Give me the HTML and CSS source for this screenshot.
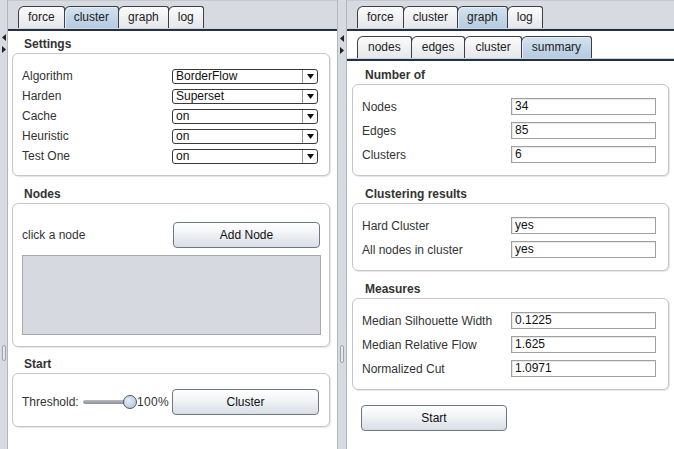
FILE: index.html
```html
<!DOCTYPE html>
<html lang="en">
<head>
    <meta charset="UTF-8">
    <title>BorderFlow Clustering</title>
    <link rel="stylesheet" href="styles.css">
</head>
<body>
<div class="window">

    <div class="strip">
        <svg class="arrow" width="4" height="7" viewBox="0 0 4 7"><path d="M4 0V7L0 3.5Z"/></svg>
        <svg class="arrow" width="4" height="7" viewBox="0 0 4 7"><path d="M0 0V7L4 3.5Z"/></svg>
        <div class="grip"></div>
    </div>

    <div class="pane pane-left">
        <div class="tabbar">
            <span class="tab">force</span>
            <span class="tab selected">cluster</span>
            <span class="tab">graph</span>
            <span class="tab">log</span>
        </div>
        <div class="tabline"></div>

        <div class="pane-body">
            <div class="section-title">Settings</div>
            <div class="group settings">
                <span class="label">Algorithm</span>
                <div class="combo"><span class="combo-value">BorderFlow</span><span class="combo-arrow"><svg width="7" height="5" viewBox="0 0 7 5"><path d="M0 0H7L3.5 5Z"/></svg></span></div>
                <span class="label">Harden</span>
                <div class="combo"><span class="combo-value">Superset</span><span class="combo-arrow"><svg width="7" height="5" viewBox="0 0 7 5"><path d="M0 0H7L3.5 5Z"/></svg></span></div>
                <span class="label">Cache</span>
                <div class="combo"><span class="combo-value">on</span><span class="combo-arrow"><svg width="7" height="5" viewBox="0 0 7 5"><path d="M0 0H7L3.5 5Z"/></svg></span></div>
                <span class="label">Heuristic</span>
                <div class="combo"><span class="combo-value">on</span><span class="combo-arrow"><svg width="7" height="5" viewBox="0 0 7 5"><path d="M0 0H7L3.5 5Z"/></svg></span></div>
                <span class="label">Test One</span>
                <div class="combo"><span class="combo-value">on</span><span class="combo-arrow"><svg width="7" height="5" viewBox="0 0 7 5"><path d="M0 0H7L3.5 5Z"/></svg></span></div>
            </div>

            <div class="section-title spaced">Nodes</div>
            <div class="group nodes">
                <div class="nodes-row">
                    <span class="label">click a node</span>
                    <button class="button">Add Node</button>
                </div>
                <div class="node-area"></div>
            </div>

            <div class="section-title spaced-sm">Start</div>
            <div class="group start">
                <span class="label">Threshold:</span>
                <div class="slider">
                    <div class="slider-track"></div>
                    <div class="slider-knob"></div>
                </div>
                <span class="label value">100%</span>
                <button class="button">Cluster</button>
            </div>
        </div>
    </div>

    <div class="divider">
        <svg class="arrow" width="4" height="7" viewBox="0 0 4 7"><path d="M4 0V7L0 3.5Z"/></svg>
        <svg class="arrow" width="4" height="7" viewBox="0 0 4 7"><path d="M0 0V7L4 3.5Z"/></svg>
        <div class="grip"></div>
    </div>

    <div class="pane pane-right">
        <div class="tabbar">
            <span class="tab">force</span>
            <span class="tab">cluster</span>
            <span class="tab selected">graph</span>
            <span class="tab">log</span>
        </div>
        <div class="tabline"></div>

        <div class="inner">
            <div class="tabbar tabbar-inner">
                <span class="tab">nodes</span>
                <span class="tab">edges</span>
                <span class="tab">cluster</span>
                <span class="tab selected">summary</span>
            </div>
            <div class="tabline"></div>

            <div class="pane-body summary">
                <div class="section-title">Number of</div>
                <div class="group fields">
                    <span class="label">Nodes</span><div class="field">34</div>
                    <span class="label">Edges</span><div class="field">85</div>
                    <span class="label">Clusters</span><div class="field">6</div>
                </div>

                <div class="section-title spaced">Clustering results</div>
                <div class="group fields">
                    <span class="label">Hard Cluster</span><div class="field">yes</div>
                    <span class="label">All nodes in cluster</span><div class="field">yes</div>
                </div>

                <div class="section-title spaced">Measures</div>
                <div class="group fields">
                    <span class="label">Median Silhouette Width</span><div class="field">0.1225</div>
                    <span class="label">Median Relative Flow</span><div class="field">1.625</div>
                    <span class="label">Normalized Cut</span><div class="field">1.0971</div>
                </div>

                <button class="button start-button">Start</button>
            </div>
        </div>
    </div>

</div>
</body>
</html>
```

FILE: styles.css
```css
* {
    box-sizing: border-box;
}

body {
    margin: 0;
    font-family: "Liberation Sans", Arial, sans-serif;
    font-size: 12px;
    color: #333;
    background-color: #d7dae0;
}

.window {
    display: flex;
    width: 674px;
    height: 449px;
    overflow: hidden;
}

/* split pane dividers */
.strip,
.divider {
    display: flex;
    flex-direction: column;
    align-items: center;
    background-color: #d7dae0;
    padding-top: 34px;
}

.strip {
    width: 8px;
    border-right: 1px solid #b3b7bf;
}

.divider {
    width: 10px;
    border-left: 1px solid #b3b7bf;
    border-right: 1px solid #b3b7bf;
    padding-top: 35px;
}

.arrow {
    fill: #222;
    margin-bottom: 5px;
}

.grip {
    width: 4px;
    height: 16px;
    margin-top: 287px;
    border: 1px solid #9ea3ab;
    border-radius: 2px;
    background-color: #e6e8ec;
}

.divider .grip {
    margin-top: 286px;
    height: 18px;
}

/* panes and tabs */
.pane {
    display: flex;
    flex-direction: column;
    background-color: white;
}

.pane-left {
    width: 329px;
}

.pane-right {
    flex: 1;
}

.tabbar {
    display: flex;
    align-items: flex-end;
    height: 28px;
    padding-left: 10px;
    background-color: #d7dae0;
    border-top: 1px solid #c6c9cf;
}

.tab {
    height: 22px;
    line-height: 21px;
    padding: 0 9px;
    margin-right: -1px;
    color: #222;
    border: 1px solid #3c3f44;
    border-bottom: none;
    border-radius: 6px 3px 0 0;
    background: linear-gradient(#fbfbfc, #e6e7ea);
}

.tab.selected {
    background: linear-gradient(#d3e2f0, #b5cbe0);
    box-shadow: inset 1px 1px 0 #e6eef7;
}

.tabline {
    height: 3px;
    border-top: 1px solid #c3d6ea;
    background-color: #27313d;
}

.inner {
    display: flex;
    flex-direction: column;
    padding-top: 5px;
}

.tabbar-inner {
    background-color: white;
    border-top: none;
    height: 22px;
}

.tabbar-inner .tab {
    padding: 0 10px;
}

/* content */
.pane-body {
    display: flex;
    flex-direction: column;
    padding: 4px 7px 0 4px;
}

.pane-body.summary {
    padding: 5px 5px 0 5px;
}

.section-title {
    height: 18px;
    line-height: 18px;
    padding-left: 12px;
    font-weight: bold;
    color: #333;
}

.summary .section-title {
    padding-left: 13px;
}

.section-title.spaced {
    margin-top: 9px;
}

.section-title.spaced-sm {
    margin-top: 8px;
}

.group {
    border: 1px solid #c4c6c9;
    border-radius: 6px;
    box-shadow: 1px 1px 1px #e4e5e8;
    background-color: white;
}

.label {
    color: #333;
    white-space: nowrap;
}

/* settings */
.settings {
    display: grid;
    grid-template-columns: 1fr 146px;
    grid-auto-rows: 20px;
    align-items: center;
    padding: 12px 11px 9px 9px;
}

.combo {
    display: flex;
    height: 15px;
    border: 1px solid #3a3a3a;
    border-radius: 3px;
    background-color: white;
}

.combo-value {
    flex: 1;
    line-height: 13px;
    padding-left: 3px;
    color: #111;
}

.combo-arrow {
    display: flex;
    align-items: center;
    justify-content: center;
    width: 15px;
    border-left: 1px solid #9a9a9a;
    fill: #111;
}

/* nodes */
.nodes {
    padding: 18px 8px 11px 9px;
}

.nodes-row {
    display: flex;
    align-items: center;
    justify-content: space-between;
}

.nodes-row .button {
    margin-right: 1px;
}

.node-area {
    height: 80px;
    margin-top: 7px;
    border: 1px solid #a6a9ae;
    background-color: #d6d9e0;
}

.button {
    width: 147px;
    height: 26px;
    padding: 0;
    font-family: inherit;
    font-size: 12px;
    color: #111;
    border: 1px solid #6e7884;
    border-radius: 4px;
    background: linear-gradient(#ffffff, #f2f4f7 40%, #d9dee6);
}

/* start */
.start {
    display: flex;
    align-items: center;
    padding: 15px 10px 11px 9px;
}

.start .label:first-child {
    margin-right: 2px;
}

.slider {
    position: relative;
    flex: 1;
    height: 16px;
}

.slider-track {
    position: absolute;
    left: 2px;
    right: 8px;
    top: 6px;
    height: 4px;
    border-radius: 2px;
    background: linear-gradient(#b8bcc2, #8d9198);
}

.slider-knob {
    position: absolute;
    right: 0;
    top: 1px;
    width: 14px;
    height: 14px;
    border: 1px solid #4c5661;
    border-radius: 50%;
    background: radial-gradient(circle at 40% 35%, #e3edf7, #a8c0d8);
}

.start .value {
    margin-right: 3px;
    letter-spacing: 0.3px;
}

/* summary fields */
.fields {
    display: grid;
    grid-template-columns: 1fr 145px;
    row-gap: 7px;
    align-items: center;
    padding: 13px 12px 12px 9px;
}

.field {
    height: 17px;
    line-height: 15px;
    padding-left: 3px;
    color: #111;
    border: 1px solid #9da0a5;
    box-shadow: inset 1px 1px 0 #e8e8e8;
    background-color: white;
}

.start-button {
    margin: 15px 0 0 9px;
    width: 146px;
}
```
